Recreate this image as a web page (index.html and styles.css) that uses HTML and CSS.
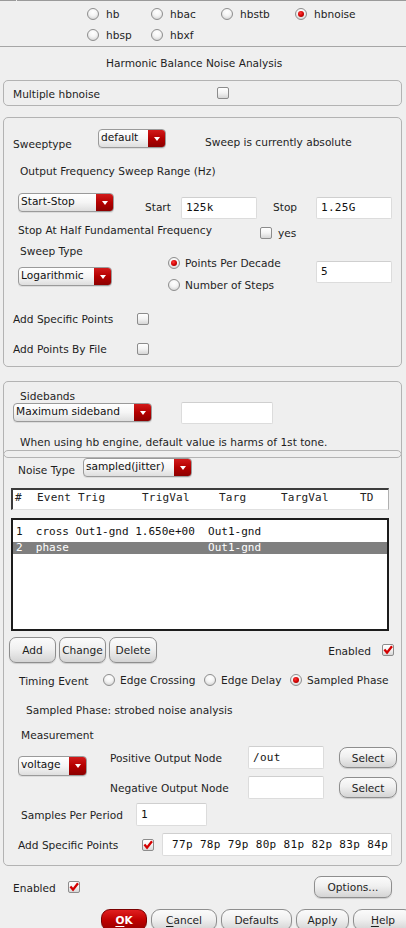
FILE: index.html
```html
<!DOCTYPE html>
<html>
<head>
<meta charset="utf-8">
<link rel="stylesheet" href="styles.css">
</head>
<body>
<div class="topline"><span class="seg1"></span><span class="seg2"></span></div>

<div class="modes">
  <label class="opt"><span class="radio"></span>hb</label>
  <label class="opt"><span class="radio"></span>hbac</label>
  <label class="opt"><span class="radio"></span>hbstb</label>
  <label class="opt"><span class="radio on"></span>hbnoise</label>
  <label class="opt"><span class="radio"></span>hbsp</label>
  <label class="opt"><span class="radio"></span>hbxf</label>
</div>
<div class="sep"></div>

<div class="title">Harmonic Balance Noise Analysis</div>

<div class="panel multi">
  <span class="lbl w-multi">Multiple hbnoise</span>
  <span class="check"></span>
</div>

<div class="panel sweep">
  <div class="row r-sweeptype">
    <span class="lbl w-sweeptype">Sweeptype</span>
    <div class="dd w-default"><span class="dd-text">default</span><span class="dd-arrow"></span></div>
    <span class="lbl absnote">Sweep is currently absolute</span>
  </div>
  <div class="lbl r-range">Output Frequency Sweep Range (Hz)</div>
  <div class="row r-startstop">
    <div class="dd w-startstop"><span class="dd-text">Start-Stop</span><span class="dd-arrow"></span></div>
    <span class="lbl w-start">Start</span>
    <div class="field w-76">125k</div>
    <span class="lbl w-stop">Stop</span>
    <div class="field w-76">1.25G</div>
  </div>
  <div class="row r-half">
    <span class="lbl w-half">Stop At Half Fundamental Frequency</span>
    <span class="check ck-half"></span>
    <span class="lbl yes">yes</span>
  </div>
  <div class="row r-sweepkind">
    <div class="col-kind">
      <div class="lbl kind-lbl">Sweep Type</div>
      <div class="dd w-log"><span class="dd-text">Logarithmic</span><span class="dd-arrow"></span></div>
    </div>
    <div class="col-steps">
      <label class="opt step"><span class="radio on tight"></span>Points Per Decade</label>
      <label class="opt step"><span class="radio tight"></span>Number of Steps</label>
    </div>
    <div class="field w-76 f-steps">5</div>
  </div>
  <div class="row r-points">
    <span class="lbl w-points">Add Specific Points</span>
    <span class="check"></span>
  </div>
  <div class="row r-file">
    <span class="lbl w-points">Add Points By File</span>
    <span class="check"></span>
  </div>
</div>

<div class="panel sidebands">
  <div class="lbl sb-lbl">Sidebands</div>
  <div class="row r-sb">
    <div class="dd w-maxsb"><span class="dd-text">Maximum sideband</span><span class="dd-arrow"></span></div>
    <div class="field w-sb"></div>
  </div>
  <div class="lbl sb-note">When using hb engine, default value is harms of 1st tone.</div>
</div>

<div class="panel noise">
  <div class="row r-noisetype">
    <span class="lbl w-noisetype">Noise Type</span>
    <div class="dd w-sampled"><span class="dd-text">sampled(jitter)</span><span class="dd-arrow"></span></div>
  </div>

  <div class="tbl-head">
    <span>#</span><span>Event Trig</span><span>TrigVal</span><span>Targ</span><span>TargVal</span><span>TD</span>
  </div>
  <div class="tbl-list">
    <div class="tbl-row">1  cross Out1-gnd 1.650e+00  Out1-gnd</div>
    <div class="tbl-row sel">2  phase                     Out1-gnd</div>
  </div>

  <div class="row r-actions">
    <button class="btn w-add">Add</button>
    <button class="btn w-change">Change</button>
    <button class="btn w-delete">Delete</button>
    <span class="lbl enabled-lbl">Enabled</span>
    <span class="check on"><svg viewBox="0 0 12 12"><path d="M2.4 5.6 L5 8.6 L10 2.2" fill="none" stroke="#d30000" stroke-width="2.3" stroke-linejoin="miter"/></svg></span>
  </div>

  <div class="row r-timing">
    <span class="lbl w-timing">Timing Event</span>
    <label class="opt w-edge1"><span class="radio tight"></span>Edge Crossing</label>
    <label class="opt w-edge2"><span class="radio tight"></span>Edge Delay</label>
    <label class="opt"><span class="radio on tight"></span>Sampled Phase</label>
  </div>

  <div class="lbl r-strobe">Sampled Phase: strobed noise analysis</div>
  <div class="lbl r-meas">Measurement</div>

  <div class="row r-measblock">
    <div class="col-meas">
      <div class="dd w-voltage"><span class="dd-text">voltage</span><span class="dd-arrow"></span></div>
    </div>
    <div class="col-nodes">
      <div class="node-row">
        <span class="lbl w-node">Positive Output Node</span>
        <div class="field w-76 h23">/out</div>
        <button class="btn sel-btn">Select</button>
      </div>
      <div class="node-row second">
        <span class="lbl w-node">Negative Output Node</span>
        <div class="field w-76 h23"></div>
        <button class="btn sel-btn">Select</button>
      </div>
    </div>
  </div>

  <div class="row r-samples">
    <span class="lbl w-samples">Samples Per Period</span>
    <div class="field w-samp h23">1</div>
  </div>

  <div class="row r-specific">
    <span class="lbl w-specific">Add Specific Points</span>
    <span class="check on"><svg viewBox="0 0 12 12"><path d="M2.4 5.6 L5 8.6 L10 2.2" fill="none" stroke="#d30000" stroke-width="2.3"/></svg></span>
    <div class="field w-pts h23">77p 78p 79p 80p 81p 82p 83p 84p</div>
  </div>
</div>

<div class="row r-enabled">
  <span class="lbl w-enabled">Enabled</span>
  <span class="check on"><svg viewBox="0 0 12 12"><path d="M2.4 5.6 L5 8.6 L10 2.2" fill="none" stroke="#d30000" stroke-width="2.3"/></svg></span>
  <button class="btn options">Options...</button>
</div>

<div class="row r-dialog">
  <button class="btn ok w-ok"><u>O</u>K</button>
  <button class="btn w-cancel"><u>C</u>ancel</button>
  <button class="btn w-defaults">Defaults</button>
  <button class="btn w-apply">Apply</button>
  <button class="btn w-help"><u>H</u>elp</button>
</div>
</body>
</html>
```

FILE: styles.css
```css
* { box-sizing: border-box; }
html, body { margin: 0; padding: 0; }
body {
  width: 406px;
  height: 928px;
  overflow: hidden;
  background: #efefef;
  font-family: "DejaVu Sans", "Liberation Sans", sans-serif;
  font-size: 10.6px;
  line-height: 14px;
  color: #1e1e1e;
}

/* ---------- generic widgets ---------- */
.lbl { display: block; white-space: nowrap; flex: none; padding-top: 1px; }
.row { display: flex; align-items: flex-start; }
.opt { display: flex; align-items: center; white-space: nowrap; }

.radio {
  flex: none;
  width: 12px;
  height: 12px;
  border-radius: 50%;
  border: 1px solid #8e8e8e;
  background: radial-gradient(circle at 50% 30%, #ffffff 0%, #f4f4f4 45%, #c9c9c9 100%);
  margin-right: 7px;
  display: flex;
  align-items: center;
  justify-content: center;
}
.radio.tight { margin-right: 5px; }
.radio.on::after {
  content: "";
  width: 6px;
  height: 6px;
  border-radius: 50%;
  background: radial-gradient(circle at 40% 35%, #ff3a3a 0%, #cf0000 55%, #7a0000 100%);
}

.check {
  flex: none;
  width: 12px;
  height: 12px;
  border: 1px solid #8c8c8c;
  border-radius: 2px;
  background: linear-gradient(#ffffff, #f3f3f3 50%, #d6d6d6);
  display: flex;
  align-items: center;
  justify-content: center;
  overflow: visible;
}
.check svg { width: 12px; height: 12px; flex: none; overflow: visible; }

.dd {
  flex: none;
  height: 19px;
  display: flex;
  border: 1px solid #9a9a9a;
  border-radius: 4px;
  overflow: hidden;
  background: linear-gradient(#ffffff, #f5f5f5 50%, #dedede);
  box-shadow: 0 1px 0 rgba(0,0,0,0.08);
}
.dd-text {
  flex: 1;
  padding-left: 2px;
  line-height: 15px;
  white-space: nowrap;
  color: #111;
}
.dd-arrow {
  flex: none;
  width: 17px;
  background: linear-gradient(#d11a1a, #b40000 50%, #8c0000);
  display: flex;
  align-items: center;
  justify-content: center;
}
.dd-arrow::after {
  content: "";
  width: 0;
  height: 0;
  border-left: 3.5px solid transparent;
  border-right: 3.5px solid transparent;
  border-top: 4px solid #ffffff;
}

.field {
  flex: none;
  height: 22px;
  background: #ffffff;
  border: 1px solid #dcdcdc;
  border-top-color: #cfcfcf;
  border-radius: 2px;
  padding-left: 4px;
  font-family: "DejaVu Sans Mono", monospace;
  font-size: 11px;
  letter-spacing: 0.3px;
  line-height: 20px;
  color: #111;
  white-space: pre;
  overflow: hidden;
}
.h23 { height: 23px; line-height: 21px; }
.w-76 { width: 76px; }

.btn {
  flex: none;
  height: 26px;
  padding: 0;
  border: 1px solid #8e8e8e;
  border-radius: 7px;
  background: linear-gradient(#fbfbfb, #f0f0f0 45%, #d4d4d4);
  box-shadow: 0 1px 1px rgba(0,0,0,0.15);
  font-family: "DejaVu Sans", sans-serif;
  font-size: 10.6px;
  color: #1e1e1e;
  text-align: center;
}
.btn u { text-decoration: underline; text-underline-offset: 2px; }

/* ---------- top ---------- */
.topline { display: flex; gap: 1px; height: 1px; }
.topline .seg1 { width: 16px; background: #9a9a9a; }
.topline .seg2 { flex: 1; background: #9a9a9a; }

.modes {
  display: grid;
  grid-template-columns: 64px 70px 74px auto;
  grid-auto-rows: 21px;
  padding-left: 87px;
  margin-top: 2px;
}
.sep { height: 1px; background: #a6a6a6; margin-top: 1px; }

.title { margin-top: 8px; padding-left: 106px; line-height: 16px; }

.panel {
  margin-left: 3px;
  width: 399px;
  border: 1px solid #b3b3b3;
  border-radius: 5px;
}

.multi {
  margin-top: 9px;
  height: 26px;
  display: flex;
  align-items: center;
  padding-left: 9px;
}
.w-multi { width: 204px; }

/* ---------- sweep ---------- */
.sweep { margin-top: 11px; height: 250px; }
.r-sweeptype { margin-top: 11px; height: 19px; }
.w-sweeptype { width: 94px; padding-left: 9px; margin-top: 7px; }
.w-default { width: 68px; }
.absnote { margin-left: 39px; margin-top: 5px; }

.r-range { margin-top: 15px; padding-left: 16px; }

.r-startstop { margin-top: 15px; padding-left: 14px; height: 26px; }
.w-startstop { width: 96px; }
.w-start { width: 36px; margin-left: 31px; margin-top: 6px; }
.w-stop { width: 43px; margin-left: 16px; margin-top: 6px; }
.r-startstop .field { margin-top: 4px; }

.r-half { margin-top: 3px; padding-left: 14px; height: 18px; }
.w-half { width: 242px; }
.ck-half { margin-top: 5px; }
.yes { margin-left: 6px; margin-top: 3px; }

.r-sweepkind { margin-top: 3px; height: 53px; }
.col-kind { width: 164px; padding-left: 14px; flex: none; }
.kind-lbl { padding-left: 2px; }
.w-log { width: 94px; margin-top: 9px; }
.col-steps { width: 148px; padding-top: 9px; flex: none; }
.step { height: 22px; }
.f-steps { margin-top: 18px; }

.r-points { margin-top: 15px; padding-left: 9px; height: 15px; align-items: center; }
.r-file { margin-top: 15px; padding-left: 9px; height: 15px; align-items: center; }
.w-points { width: 124px; }

/* ---------- sidebands ---------- */
.sidebands { margin-top: 14px; height: 77px; }
.sb-lbl { margin-top: 7px; padding-left: 16px; line-height: 12px; }
.r-sb { padding-left: 9px; height: 22px; }
.w-maxsb { width: 139px; margin-top: 1px; }
.w-sb { width: 92px; margin-left: 29px; }
.sb-note { margin-top: 10px; padding-left: 16px; }

/* ---------- noise ---------- */
.noise { margin-top: -8px; height: 416px; }
.r-noisetype { margin-top: 7px; height: 19px; }
.w-noisetype { width: 79px; padding-left: 14px; margin-top: 4px; }
.w-sampled { width: 109px; }

.tbl-head {
  margin-top: 11px;
  margin-left: 7px;
  width: 378px;
  height: 22px;
  background: #ffffff;
  border-top: 2px solid #3c3c3c;
  border-left: 2px solid #3c3c3c;
  border-right: 1px solid #b0b0b0;
  border-bottom: 1px solid #e0e0e0;
  padding: 1px 0 0 2px;
  display: grid;
  grid-template-columns: 22px 105px 77px 62px 79px auto;
  font-family: "DejaVu Sans Mono", monospace;
  font-size: 11px;
  letter-spacing: 0.2px;
  color: #222;
}
.tbl-list {
  margin-top: 8px;
  margin-left: 7px;
  width: 378px;
  height: 113px;
  background: #ffffff;
  border: 2px solid #1c1c1c;
  padding-top: 6px;
  display: flex;
  flex-direction: column;
  gap: 4px;
}
.tbl-row {
  height: 12px;
  line-height: 12px;
  padding-left: 3px;
  white-space: pre;
  font-family: "DejaVu Sans Mono", monospace;
  font-size: 11px;
  color: #111;
}
.tbl-row.sel { background: #7f7f7f; color: #ffffff; }

.r-actions { margin-top: 6px; padding-left: 5px; padding-right: 7px; height: 26px; align-items: center; gap: 3px; }
.w-add { width: 47px; }
.w-change { width: 47px; }
.w-delete { width: 48px; }
.enabled-lbl { margin-left: auto; margin-right: 8px; }

.r-timing { margin-top: 9px; padding-left: 15px; height: 16px; align-items: center; }
.w-timing { width: 84px; }
.w-edge1 { width: 101px; }
.w-edge2 { width: 86px; }

.r-strobe { margin-top: 14px; padding-left: 22px; }
.r-meas { margin-top: 10px; padding-left: 17px; }

.r-measblock { margin-top: 4px; }
.col-meas { width: 106px; padding-left: 14px; flex: none; }
.w-voltage { width: 69px; height: 20px; margin-top: 10px; }
.col-nodes { flex: none; }
.node-row { display: flex; align-items: center; height: 23px; }
.node-row.second { margin-top: 7px; }
.w-node { width: 138px; }
.sel-btn { width: 58px; height: 21px; margin-left: 15px; border-radius: 8px; }

.r-samples { margin-top: 4px; padding-left: 17px; height: 23px; align-items: center; }
.w-samples { width: 115px; }
.w-samp { width: 71px; }

.r-specific { margin-top: 7px; padding-left: 14px; height: 23px; align-items: center; }
.w-specific { width: 124px; }
.w-pts { width: 230px; margin-left: 8px; padding-left: 9px; letter-spacing: 0.35px; }

/* ---------- bottom ---------- */
.r-enabled { margin-top: 10px; padding-left: 13px; height: 22px; align-items: center; }
.w-enabled { width: 55px; }
.options { margin-left: auto; margin-right: 14px; width: 78px; height: 22px; }

.r-dialog { margin-top: 11px; padding-left: 101px; gap: 4px; height: 22px; }
.r-dialog .btn { height: 22px; border-radius: 9px; }
.w-ok { width: 46px; }
.w-cancel { width: 66px; }
.w-defaults { width: 71px; }
.w-apply { width: 53px; }
.w-help { width: 60px; }
.btn.ok {
  background: linear-gradient(#e02020, #c00000 50%, #980000);
  border-color: #7a0000;
  color: #ffffff;
  font-weight: bold;
}
```
